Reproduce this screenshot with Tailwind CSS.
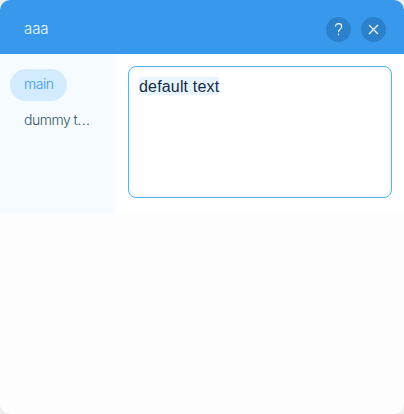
<!DOCTYPE html>
<html lang="en">
<head>
<meta charset="utf-8">
<title>aaa</title>
<script src="https://cdn.jsdelivr.net/npm/@tailwindcss/browser@4"></script>
</head>
<body class="bg-[#eeeeee]">
<main class="flex h-[414px] w-[404px] flex-col overflow-hidden rounded-[10px] bg-[#fdfdfd] font-['Inter',sans-serif]">
  <header class="flex h-[54px] shrink-0 items-center bg-[#3899ec] pr-[18px] pl-6 text-white">
    <h1 class="mt-[3px] flex-1 text-[15px] leading-6 font-light tracking-[-0.1px] text-white/90">aaa</h1>
    <div class="mt-[5px] flex gap-[10px]">
      <button aria-label="Help" class="grid size-[25px] place-items-center rounded-full bg-[#2b81cb]">
        <svg class="size-[25px]" viewBox="0 0 25 25" fill="none" stroke="currentColor" stroke-width="1.1"><path d="M9.500 9.600C9.500 7.700 10.700 6.600 12.600 6.600S15.700 7.800 15.700 9.500C15.700 12 12.500 12 12.500 15.300M12.500 16.700V18.200"/></svg>
      </button>
      <button aria-label="Close" class="grid size-[25px] place-items-center rounded-full bg-[#2b81cb]">
        <svg class="size-[25px]" viewBox="0 0 25 25" fill="none" stroke="currentColor" stroke-width="1.1"><path d="M8 8L17 17M17 8L8 17"/></svg>
      </button>
    </div>
  </header>
  <section class="flex h-[159px] shrink-0 bg-white">
    <nav class="flex w-[116px] flex-col items-start bg-[#f5fbff] pt-[15px] pl-[10px] text-[14px] font-light">
      <a class="flex h-8 w-[57px] items-center rounded-full bg-[#d3ebff] px-[14px] pb-[3px] tracking-[-0.5px] text-[#3899ec]">main</a>
      <a class="mt-1 flex h-8 items-center px-[14px] pb-[3px] tracking-[-0.5px] whitespace-nowrap text-[#32536a]">dummy t<span class="tracking-[0.4px]">...</span></a>
    </nav>
    <div class="flex-1 p-3 pb-[15px]">
      <div class="h-full rounded-lg border border-[#4eb7f5] bg-white px-[10px] pt-[10px] font-['Liberation_Sans',sans-serif] text-[16px] leading-[18px] tracking-[0.17px] text-[#162d3d] shadow-[inset_0_0_3px_#00000026]"><span class="inline-block h-[18px] bg-[#e8f5ff] leading-[20px]">default text</span></div>
    </div>
  </section>
</main>
</body>
</html>
